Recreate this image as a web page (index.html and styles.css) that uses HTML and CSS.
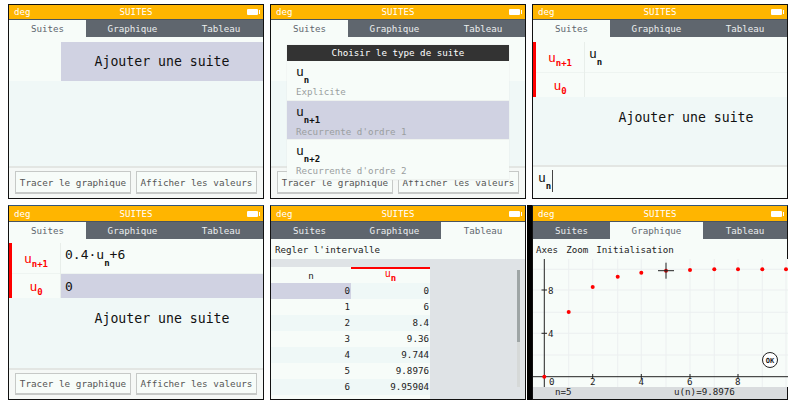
FILE: index.html
```html
<!DOCTYPE html>
<html lang="fr">
<head>
    <meta charset="UTF-8">
    <meta name="viewport" content="width=device-width, initial-scale=1.0">
    <title>Suites</title>
    <link rel="stylesheet" href="styles.css">
</head>
<body>
    <div class="screens">

        <!-- 1: empty list -->
        <div class="panel top">
            <div class="header"><span>deg</span><span class="header-title">SUITES</span><span class="battery"></span></div>
            <div class="tabs"><div class="tab active">Suites</div><div class="tab">Graphique</div><div class="tab">Tableau</div></div>
            <div class="body">
                <div class="list">
                    <div class="add-row"><div class="add-left"></div><div class="add-label selected">Ajouter une suite</div></div>
                </div>
                <div class="toolbar"><div class="btn">Tracer le graphique</div><div class="btn">Afficher les valeurs</div></div>
            </div>
        </div>

        <!-- 2: type chooser -->
        <div class="panel top">
            <div class="header"><span>deg</span><span class="header-title">SUITES</span><span class="battery"></span></div>
            <div class="tabs"><div class="tab active">Suites</div><div class="tab">Graphique</div><div class="tab">Tableau</div></div>
            <div class="body">
                <div class="list">
                    <div class="add-row"><div class="add-left"></div><div class="add-label white"></div></div>
                </div>
                <div class="toolbar"><div class="btn">Tracer le graphique</div><div class="btn">Afficher les valeurs</div></div>
                <div class="modal">
                    <div class="modal-title">Choisir le type de suite</div>
                    <div class="modal-item">
                        <div class="math">u<sub>n</sub></div>
                        <div class="modal-note">Explicite</div>
                    </div>
                    <div class="modal-item selected">
                        <div class="math">u<sub>n+1</sub></div>
                        <div class="modal-note">Recurrente d'ordre 1</div>
                    </div>
                    <div class="modal-item">
                        <div class="math">u<sub>n+2</sub></div>
                        <div class="modal-note">Recurrente d'ordre 2</div>
                    </div>
                </div>
            </div>
        </div>

        <!-- 3: editing -->
        <div class="panel top">
            <div class="header"><span>deg</span><span class="header-title">SUITES</span><span class="battery"></span></div>
            <div class="tabs"><div class="tab active">Suites</div><div class="tab">Graphique</div><div class="tab">Tableau</div></div>
            <div class="body">
                <div class="list">
                    <div class="seq">
                        <div class="seq-names">
                            <div class="seq-name tall math">u<sub>n+1</sub></div>
                            <div class="seq-name short math">u<sub>0</sub></div>
                        </div>
                        <div class="seq-values">
                            <div class="seq-value tall math">u<sub>n</sub></div>
                            <div class="seq-value short"></div>
                        </div>
                    </div>
                    <div class="add-row"><div class="add-left clear"></div><div class="add-label">Ajouter une suite</div></div>
                </div>
                <div class="input-bar"><span class="math">u<sub>n</sub></span><span class="cursor"></span></div>
            </div>
        </div>

        <!-- 4: filled in -->
        <div class="panel">
            <div class="header"><span>deg</span><span class="header-title">SUITES</span><span class="battery"></span></div>
            <div class="tabs"><div class="tab active">Suites</div><div class="tab">Graphique</div><div class="tab">Tableau</div></div>
            <div class="body">
                <div class="list">
                    <div class="seq">
                        <div class="seq-names">
                            <div class="seq-name tall math">u<sub>n+1</sub></div>
                            <div class="seq-name short math">u<sub>0</sub></div>
                        </div>
                        <div class="seq-values">
                            <div class="seq-value tall math">0.4·u<sub>n</sub>+6</div>
                            <div class="seq-value short selected">0</div>
                        </div>
                    </div>
                    <div class="add-row"><div class="add-left clear"></div><div class="add-label">Ajouter une suite</div></div>
                </div>
                <div class="toolbar"><div class="btn">Tracer le graphique</div><div class="btn">Afficher les valeurs</div></div>
            </div>
        </div>

        <!-- 5: values -->
        <div class="panel">
            <div class="header"><span>deg</span><span class="header-title">SUITES</span><span class="battery"></span></div>
            <div class="tabs"><div class="tab">Suites</div><div class="tab">Graphique</div><div class="tab active">Tableau</div></div>
            <div class="body">
                <div class="menu">Regler l'intervalle</div>
                <div class="table-area">
                    <div class="table">
                        <div class="th">n</div>
                        <div class="th red math">u<sub>n</sub></div>
                        <div class="td selected">0</div><div class="td tint">0</div>
                        <div class="td">1</div><div class="td">6</div>
                        <div class="td tint">2</div><div class="td tint">8.4</div>
                        <div class="td">3</div><div class="td">9.36</div>
                        <div class="td tint">4</div><div class="td tint">9.744</div>
                        <div class="td">5</div><div class="td">9.8976</div>
                        <div class="td tint">6</div><div class="td tint">9.95904</div>
                    </div>
                    <div class="scrollbar"><div class="scroll-thumb"></div></div>
                </div>
            </div>
        </div>

        <!-- 6: graph -->
        <div class="panel thick-left">
            <div class="header"><span>deg</span><span class="header-title">SUITES</span><span class="battery"></span></div>
            <div class="tabs"><div class="tab">Suites</div><div class="tab active">Graphique</div><div class="tab">Tableau</div></div>
            <div class="body">
                <div class="menu menu-gap"><span>Axes</span><span>Zoom</span><span>Initialisation</span></div>
                <svg class="graph" viewBox="0 0 255 128" width="255" height="128">
                    <g class="grid">
                        <path d="M35.7 0V128M59.7 0V128M84.7 0V128M108.3 0V128M133 0V128M157 0V128M181.3 0V128M205 0V128M229.3 0V128M253 0V128"/>
                        <path d="M0 10.3H255M0 31H255M0 53.3H255M0 74.3H255M0 96H255"/>
                    </g>
                    <g class="axis">
                        <path d="M11.3 0V128M0 117.7H255"/>
                        <path d="M8.5 31H14M8.5 74.3H14M59.7 115V120M108.3 115V120M157 115V120M205 115V120"/>
                    </g>
                    <text x="15" y="34.5">8</text>
                    <text x="15" y="78">4</text>
                    <text x="16" y="125.6">0</text>
                    <text x="57" y="125.6">2</text>
                    <text x="105.5" y="125.6">4</text>
                    <text x="154" y="125.6">6</text>
                    <text x="202" y="125.6">8</text>
                    <g class="dots">
                        <circle cx="11.3" cy="117.7" r="2"/>
                        <circle cx="35.7" cy="53" r="2"/>
                        <circle cx="59.7" cy="28" r="2"/>
                        <circle cx="84.7" cy="17.7" r="2"/>
                        <circle cx="108.3" cy="13.7" r="2"/>
                        <circle cx="133" cy="11.7" r="2"/>
                        <circle cx="157" cy="11" r="2"/>
                        <circle cx="181.3" cy="10.3" r="2"/>
                        <circle cx="205" cy="10.3" r="2"/>
                        <circle cx="229.3" cy="10.3" r="2"/>
                        <circle cx="253" cy="10.3" r="2"/>
                    </g>
                    <path class="cross" d="M133 3.7V19.7M125 11.7H141"/>
                    <circle class="ok-ring" cx="237" cy="101" r="7.5"/>
                    <text class="ok-text" x="237" y="103.6">OK</text>
                </svg>
                <div class="graph-footer"><span class="foot-n">n=5</span><span class="foot-u">u(n)=9.8976</span></div>
            </div>
        </div>

    </div>
</body>
</html>
```

FILE: styles.css
```css
html, body {
    margin: 0;
    padding: 0;
    background: #ffffff;
}

body {
    width: 795px;
    height: 404px;
    overflow: hidden;
    font-family: 'DejaVu Sans Mono', monospace;
    font-size: 9.2px;
    color: #222222;
}

.screens {
    display: grid;
    grid-template-columns: repeat(3, 256px);
    grid-auto-rows: 195px;
    column-gap: 6px;
    row-gap: 6px;
    padding: 4px 0 0 8px;
}

.panel {
    box-sizing: border-box;
    display: flex;
    flex-direction: column;
    border: 1px solid #111111;
    border-top-color: #33557a;
    background: #f7fcf9;
}

.panel.top {
    border-top-color: #111111;
}

.thick-left {
    box-shadow: -5px 0 0 #000000;
}

.header {
    height: 15px;
    flex: none;
    position: relative;
    display: flex;
    align-items: center;
    justify-content: space-between;
    padding: 0 4px 0 5px;
    background: #ffb500;
    color: #ffffff;
    font-size: 9.1px;
}

.top .header {
    height: 14px;
}

.header-title {
    position: absolute;
    left: 0;
    right: 0;
    text-align: center;
}

.battery {
    position: relative;
    width: 11px;
    height: 6px;
    margin-right: 1px;
    background: #ffffff;
    border-radius: 1px;
}

.battery::after {
    content: "";
    position: absolute;
    right: -2px;
    top: 1px;
    width: 1px;
    height: 4px;
    background: #ffffff;
}

.tabs {
    height: 18px;
    flex: none;
    box-sizing: border-box;
    display: grid;
    grid-template-columns: 77px 93px 1fr;
    background: #5f666e;
    border-top: 1px solid #4b5560;
}

.tab {
    display: flex;
    align-items: center;
    justify-content: center;
    color: #eceeee;
    font-size: 9.2px;
}

.tab.active {
    background: #f7fcf9;
    color: #5f666e;
}

.body {
    position: relative;
    flex: 1;
    min-height: 0;
    display: flex;
    flex-direction: column;
    background: #f0f8f7;
}

.list {
    flex: 1;
    min-height: 0;
    padding-top: 4px;
    background: linear-gradient(#f7fcf9 5px, transparent 5px);
}

.top .list {
    padding-top: 5px;
}

.selected {
    background: #d0d2e2 !important;
}

.add-row {
    display: flex;
    height: 39px;
}

.seq + .add-row {
    height: 40px;
}

.add-left {
    width: 52px;
    flex: none;
    background: #f7fcf9;
}

.add-left.clear {
    background: transparent;
}

.add-label {
    flex: 1;
    display: flex;
    align-items: center;
    justify-content: center;
    font-size: 13.2px;
    color: #111111;
}

.add-label.white {
    background: #f7fcf9;
}

.toolbar {
    height: 31px;
    flex: none;
    box-sizing: border-box;
    display: flex;
    gap: 5px;
    padding: 3px 6px 4px;
    background: #f5f8f6;
    border-top: 2px solid #e3e6e3;
}

.top .toolbar {
    height: 32px;
}

.btn {
    box-sizing: border-box;
    display: flex;
    align-items: center;
    justify-content: center;
    width: 116px;
    background: #f7fcf9;
    border: 1px solid #c6c9c7;
    border-bottom-width: 2px;
    color: #555555;
    font-size: 9.3px;
    white-space: nowrap;
}

.btn + .btn {
    width: 121px;
}

.math {
    font-size: 13px;
    line-height: 1;
    color: #111111;
}

.math sub {
    font-size: 9px;
    font-weight: bold;
    line-height: 0;
    vertical-align: -7px;
}

.seq {
    display: flex;
}

.seq-names {
    width: 52px;
    flex: none;
    box-sizing: border-box;
    border-left: 3px solid #ff0000;
    border-right: 1px solid #e8eeea;
    background: #f7fcf9;
}

.seq-name {
    display: flex;
    align-items: center;
    justify-content: center;
    color: #ff0000;
    box-sizing: border-box;
}

.seq-name sub,
.th sub {
    color: #ff0000;
}

.seq-name sub {
    margin-top: 12px;
    align-self: center;
    vertical-align: baseline;
}

.tall {
    height: 31px;
    border-bottom: 1px solid #eef4f1;
}

.short {
    height: 24px;
}

.seq-values {
    flex: 1;
    background: #f7fcf9;
}

.seq-value {
    box-sizing: border-box;
    display: flex;
    align-items: center;
    padding-left: 4px;
    font-size: 13px;
    color: #111111;
}

.seq-value.tall {
    align-items: flex-start;
    padding-top: 5px;
}

.seq-value sub {
    margin-top: 11px;
    vertical-align: baseline;
    line-height: 1;
}

.input-bar {
    height: 33px;
    flex: none;
    box-sizing: border-box;
    display: flex;
    align-items: flex-start;
    padding: 4px 0 0 5px;
    background: #f7fcf9;
    border-top: 2px solid #e3e6e3;
}

.cursor {
    width: 1px;
    height: 22px;
    margin-top: -1px;
    margin-left: 1px;
    background: #444444;
}

.modal {
    position: absolute;
    left: 16px;
    top: 8px;
    width: 222px;
    background: #f7fcf9;
    box-shadow: 0 0 1px #d8dcd9;
}

.modal-title {
    height: 16px;
    line-height: 16px;
    text-align: center;
    background: #333333;
    color: #ffffff;
    font-size: 9.2px;
}

.modal-item {
    box-sizing: border-box;
    height: 39.5px;
    padding: 4px 0 0 9px;
    border-bottom: 1px solid #eef2ef;
}

.modal-item .math {
    height: 21px;
}

.modal-note {
    color: #9a9e9f;
    font-size: 9.2px;
    line-height: 11px;
}

.menu {
    height: 20px;
    flex: none;
    display: flex;
    align-items: center;
    padding-left: 4px;
    background: #f7fcf9;
    color: #222222;
    font-size: 9.2px;
}

.menu-gap {
    gap: 8px;
    padding-left: 3px;
}

.table-area {
    position: relative;
    flex: 1;
    min-height: 0;
    overflow: hidden;
    padding-top: 8px;
    background: #dfe3e6;
}

.table {
    width: 159px;
    display: grid;
    grid-template-columns: 80px 79px;
    grid-auto-rows: 16px;
    background: #f7fcf9;
    padding-bottom: 5px;
}

.th {
    display: flex;
    align-items: center;
    justify-content: center;
    font-size: 9.2px;
}

.th.red {
    box-sizing: border-box;
    border-top: 2px solid #ff0000;
    color: #ff0000;
    font-size: 10px;
    align-items: flex-start;
}

.th.red sub {
    line-height: 1;
    margin-top: 5px;
    vertical-align: baseline;
}

.td {
    text-align: right;
    line-height: 16px;
    padding-right: 1px;
    font-size: 9.2px;
}

.tint {
    background: #eff8f7;
}

.scrollbar {
    position: absolute;
    right: 5px;
    top: 11px;
    width: 3px;
    height: 117px;
    background: #d6d9d8;
}

.scroll-thumb {
    height: 72px;
    background: #9ea5a5;
}

.graph {
    display: block;
    flex: none;
    background: #f7fcf9;
}

.graph text {
    font-family: 'DejaVu Sans Mono', monospace;
    font-size: 9.2px;
    fill: #222222;
}

.grid path {
    fill: none;
    stroke: #eceff0;
    stroke-width: 1;
}

.axis path {
    fill: none;
    stroke: #222222;
    stroke-width: 1;
}

.dots circle {
    fill: #ff0000;
}

.cross {
    fill: none;
    stroke: #222222;
    stroke-width: 1;
}

.ok-ring {
    fill: #ffffff;
    stroke: #222222;
    stroke-width: 1;
}

.graph .ok-text {
    font-size: 7px;
    font-weight: bold;
    text-anchor: middle;
}

.graph-footer {
    position: relative;
    flex: 1;
    min-height: 0;
    background: #d9dcde;
    font-size: 9.2px;
    line-height: 10px;
}

.foot-n {
    margin-left: 22px;
}

.foot-u {
    position: absolute;
    left: 141px;
}
```
